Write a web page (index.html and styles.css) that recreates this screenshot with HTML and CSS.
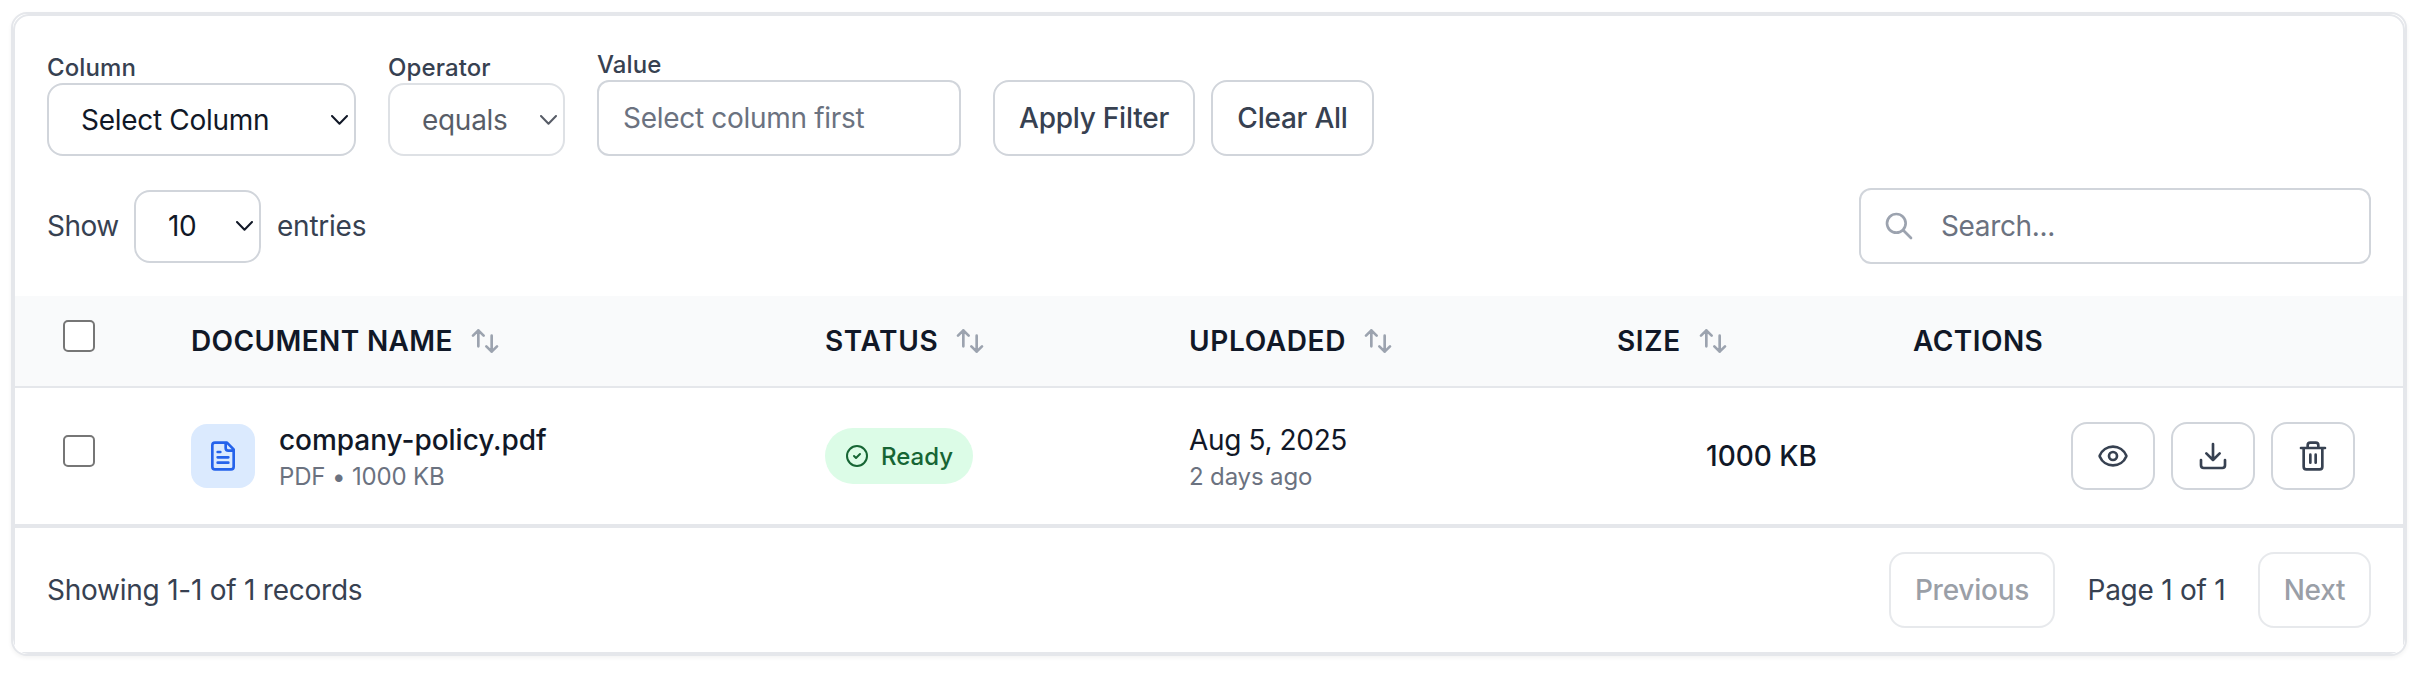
FILE: index.html
```html
<!DOCTYPE html>
<html lang="en">
<head>
<meta charset="utf-8">
<title>Documents</title>
<link rel="stylesheet" href="styles.css">
</head>
<body>
<svg class="defs" width="0" height="0">
  <symbol id="chevron" viewBox="0 0 17 10"><path d="M1 1 8.500 8.800 16 1"/></symbol>
  <symbol id="sort" viewBox="0 0 24 24"><path d="M7 16V4m0 0L3 8m4-4l4 4m6 0v12m0 0l4-4m-4 4l-4-4"/></symbol>
</svg>
<main class="card">
<div class="panel">
  <section class="filters">
    <div class="field">
      <span class="label">Column</span>
      <div class="select select-column"><span>Select Column</span><svg class="chevron"><use href="#chevron"/></svg></div>
    </div>
    <div class="field">
      <span class="label">Operator</span>
      <div class="select select-operator"><span>equals</span><svg class="chevron"><use href="#chevron"/></svg></div>
    </div>
    <div class="field">
      <span class="label">Value</span>
      <div class="input input-value">Select column first</div>
    </div>
    <div class="buttons">
      <button class="btn apply">Apply Filter</button>
      <button class="btn clear">Clear All</button>
    </div>
  </section>
  <section class="toolbar">
    <div class="entries">
      <span class="show">Show</span>
      <div class="select select-count"><span>10</span><svg class="chevron"><use href="#chevron"/></svg></div>
      <span>entries</span>
    </div>
    <div class="input search">
      <svg class="icon-search" viewBox="0 0 24 24"><path d="M21 21l-6-6m2-5a7 7 0 11-14 0 7 7 0 0114 0z"/></svg>
      <span>Search...</span>
    </div>
  </section>
  <section class="table">
    <div class="row head">
      <div class="check"><span class="box"></span></div>
      <div class="th th-name"><span>DOCUMENT NAME</span><svg class="sort"><use href="#sort"/></svg></div>
      <div class="th"><span>STATUS</span><svg class="sort"><use href="#sort"/></svg></div>
      <div class="th"><span>UPLOADED</span><svg class="sort"><use href="#sort"/></svg></div>
      <div class="th"><span>SIZE</span><svg class="sort"><use href="#sort"/></svg></div>
      <div class="th th-actions"><span>ACTIONS</span></div>
    </div>
    <div class="row body">
      <div class="check"><span class="box"></span></div>
      <div class="doc">
        <span class="doc-icon"><svg viewBox="0 0 24 24"><path d="M15 2H6a2 2 0 0 0-2 2v16a2 2 0 0 0 2 2h12a2 2 0 0 0 2-2V7ZM14 2v4a2 2 0 0 0 2 2h4M10 9H8M16 13H8M16 17H8"/></svg></span>
        <div class="two"><span class="name">company-policy.pdf</span><span class="sub">PDF • 1000 KB</span></div>
      </div>
      <div class="status"><span class="pill"><svg viewBox="0 0 24 24"><circle cx="12" cy="12" r="10"/><path d="m9 12 2 2 4-4"/></svg><span>Ready</span></span></div>
      <div class="two"><span class="date">Aug 5, 2025</span><span class="sub">2 days ago</span></div>
      <div class="size">1000 KB</div>
      <div class="actions">
        <button class="act"><svg viewBox="0 0 24 24"><path d="M2.062 12.348a1 1 0 0 1 0-.696 10.750 10.750 0 0 1 19.876 0 1 1 0 0 1 0 .696 10.750 10.750 0 0 1-19.876 0"/><circle cx="12" cy="12" r="3"/></svg></button>
        <button class="act"><svg viewBox="0 0 24 24"><path d="M21 15v4a2 2 0 0 1-2 2H5a2 2 0 0 1-2-2v-4M7 10l5 5 5-5M12 15V3"/></svg></button>
        <button class="act"><svg viewBox="0 0 24 24"><path d="M3 6h18M19 6v14a2 2 0 0 1-2 2H7a2 2 0 0 1-2-2V6M8 6V4a2 2 0 0 1 2-2h4a2 2 0 0 1 2 2v2M10 11v6M14 11v6"/></svg></button>
      </div>
    </div>
  </section>
  <footer class="footer">
    <span class="showing">Showing 1-1 of 1 records</span>
    <div class="pager">
      <button class="btn prev" disabled>Previous</button>
      <span class="page">Page 1 of 1</span>
      <button class="btn next" disabled>Next</button>
    </div>
  </footer>
</div>
</main>
</body>
</html>
```
FILE: styles.css
```css
* { box-sizing: border-box; }
body { margin: 0; padding: 12px 19px 20px 11px; height: 676px; background: #fff; font-family: Inter, "Liberation Sans", sans-serif; font-size: 28px; line-height: 40px; letter-spacing: -.24px; color: #374151; }
.defs { display: block; height: 0; }
svg { fill: none; stroke: currentColor; stroke-width: 2; stroke-linecap: round; stroke-linejoin: round; flex: none; }
.card { height: 644px; border: 2px solid #e5e7eb; border-radius: 16px; background: #fff; overflow: hidden; white-space: nowrap; box-shadow: 0 2px 4px rgba(0,0,0,.05); }
.panel { height: 640px; border: 2px solid #e5e7eb; border-radius: 16px; }
.filters { display: flex; align-items: flex-end; gap: 32px; height: 140px; padding: 0 32px; }
.field { display: flex; flex-direction: column; }
.label { font-size: 24px; line-height: 32px; height: 31px; font-weight: 500; letter-spacing: .1px; }
.select { display: flex; align-items: center; justify-content: space-between; height: 73px; border: 2px solid #d1d5db; border-radius: 16px; background: #fff; color: #111827; padding: 0 6px 0 32px; letter-spacing: -.3px; }
.select-column { width: 309px; }
.select-operator { width: 177px; opacity: .7; }
.select-count { width: 127px; }
.chevron { width: 17px; height: 10px; }
.input { display: flex; align-items: center; height: 76px; border: 2px solid #d1d5db; border-radius: 12px; color: #6b7280; background: #fff; }
.input-value { width: 364px; padding-left: 24px; letter-spacing: -.3px; }
.buttons { display: flex; gap: 16px; }
.btn { height: 76px; padding: 0; border: 2px solid #d1d5db; border-radius: 16px; background: #fff; color: #374151; font: 500 28px/40px Inter, "Liberation Sans", sans-serif; letter-spacing: -.24px; }
.apply { width: 202px; }
.clear { width: 163px; }
.toolbar { display: flex; align-items: center; justify-content: space-between; height: 140px; padding: 0 32px; }
.entries { display: flex; align-items: center; gap: 16px; }
.show { width: 71px; letter-spacing: -.5px; }
.search { width: 512px; gap: 26px; padding-left: 22px; letter-spacing: -.35px; }
.icon-search { width: 32px; height: 32px; color: #9ca3af; }
.row { display: grid; grid-template-columns: 176px 634px 364px 428px 296px 1fr; align-items: center; }
.head { height: 92px; background: #f9fafb; border-bottom: 2px solid #e5e7eb; }
.body { height: 136px; }
.check { padding-left: 48px; }
.box { display: block; width: 32px; height: 32px; margin-bottom: 11px; border: 2px solid #767676; border-radius: 5px; background: #fff; }
.th { display: flex; align-items: center; gap: 16px; color: #111827; font-weight: 600; letter-spacing: .65px; }
.th-name { letter-spacing: .38px; }
.th-actions { letter-spacing: .45px; }
.sort { width: 32px; height: 32px; color: #9ca3af; }
.doc { display: flex; align-items: center; gap: 24px; }
.doc-icon { display: flex; align-items: center; justify-content: center; width: 64px; height: 64px; border-radius: 16px; background: #dbeafe; color: #2563eb; }
.doc-icon svg { width: 32px; height: 32px; }
.two { display: flex; flex-direction: column; color: #111827; }
.name { font-weight: 500; letter-spacing: -.04px; }
.date { letter-spacing: -.36px; }
.sub { font-size: 24px; line-height: 34px; height: 32px; color: #6b7280; letter-spacing: -.15px; }
.status { display: flex; }
.pill { display: flex; align-items: center; gap: 12px; width: 148px; height: 56px; padding-left: 20px; border-radius: 28px; background: #dcfce7; color: #166534; font-size: 24px; line-height: 34px; font-weight: 500; letter-spacing: 0; }
.pill span { padding-top: 2px; }
.pill svg { width: 24px; height: 24px; }
.size { padding-right: 96px; text-align: right; color: #111827; font-weight: 500; letter-spacing: 0; }
.actions { display: flex; justify-content: flex-end; gap: 16px; padding-right: 48px; }
.act { display: flex; align-items: center; justify-content: center; width: 84px; height: 68px; padding: 0; border: 2px solid #d1d5db; border-radius: 16px; background: #fff; color: #374151; }
.act svg { width: 32px; height: 32px; }
.footer { display: flex; align-items: center; justify-content: space-between; height: 128px; padding: 0 32px; border-top: 4px solid #e5e7eb; background: #fff; }
.pager { display: flex; align-items: center; gap: 32px; }
.page { width: 139px; text-align: center; }
.btn:disabled { opacity: .5; }
.prev { width: 166px; }
.next { width: 113px; }
```
